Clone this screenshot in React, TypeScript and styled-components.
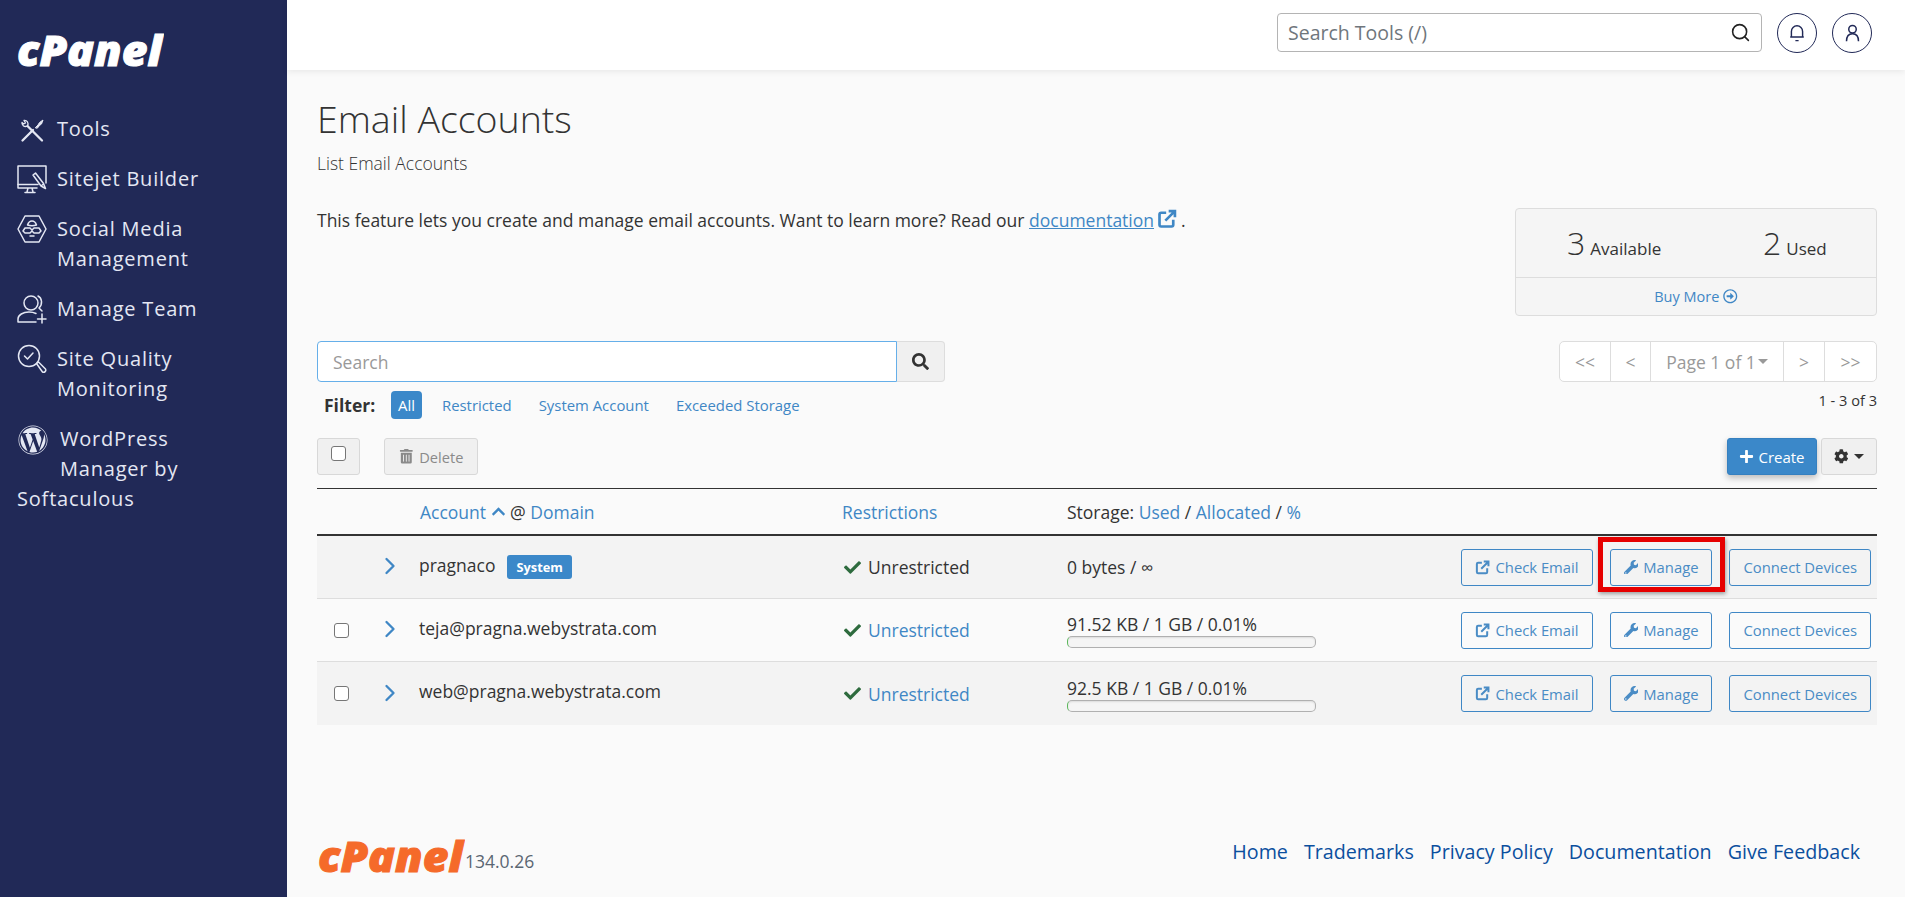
import React from 'react';
import styled, { createGlobalStyle } from 'styled-components';
import { ChevronRight, Search as SearchIcon } from 'lucide-react';
import {
  FaCheck,
  FaChevronUp,
  FaCog,
  FaPlus,
  FaRegArrowAltCircleRight,
  FaSearch,
  FaTrashAlt,
  FaWordpress,
  FaWrench,
} from 'react-icons/fa';

const GlobalStyle = createGlobalStyle`
  html, body {
    margin: 0;
    padding: 0;
    background: #fafafa;
    font-family: 'Open Sans', 'Liberation Sans', sans-serif;
    font-size: 17.5px;
    color: #333;
  }
  a {
    color: #3f87c5;
    text-decoration: none;
  }
  * {
    box-sizing: border-box;
  }
`;

const Page = styled.div`
  display: flex;
  min-height: 897px;
`;

/* sidebar */
const Sidebar = styled.aside`
  width: 287px;
  flex: none;
  background: #212957;
  color: #e4e7f3;
`;

const BrandBox = styled.div`
  height: 114px;
  padding: 21px 0 0 16px;
`;

const LogoMark = styled.svg`
  display: block;
  flex: none;
`;

const LogoWord = styled.text`
  font-family: 'Open Sans', sans-serif;
  font-style: italic;
  font-weight: 800;
  font-size: 42px;
`;

const Nav = styled.nav`
  display: flex;
  flex-direction: column;
  gap: 20px;
  padding-left: 17px;
  padding-right: 30px;
  font-size: 20px;
  line-height: 30px;
  letter-spacing: 0.8px;
`;

const NavItem = styled.a`
  display: flex;
  gap: 10px;
  color: inherit;
`;

const NavIcon = styled.span`
  width: 30px;
  height: 30px;
  flex: none;
  display: flex;
  align-items: center;
  justify-content: center;
`;

const FloatItem = styled.a`
  display: block;
  color: inherit;
`;

const FloatIcon = styled.span`
  float: left;
  width: 43px;
  height: 46px;
  padding: 1px 0 0 1px;
  font-size: 30px;
  line-height: 30px;
`;

/* top bar */
const Main = styled.div`
  flex: 1;
  min-width: 0;
  display: flex;
  flex-direction: column;
`;

const TopBar = styled.header`
  height: 70px;
  flex: none;
  display: flex;
  align-items: center;
  justify-content: flex-end;
  gap: 15px;
  padding: 0 33px 5px 0;
  background: #fff;
  box-shadow: 0 2px 6px rgba(0, 0, 0, 0.07);
`;

const ToolSearch = styled.div`
  width: 485px;
  height: 39px;
  display: flex;
  align-items: center;
  padding: 0 10px 0 8px;
  background: #fff;
  border: 1px solid #b4b4b4;
  border-radius: 4px;
  color: #222;
`;

const ToolInput = styled.input`
  flex: 1;
  min-width: 0;
  border: 0;
  outline: 0;
  padding: 0 2px;
  background: transparent;
  font-family: inherit;
  font-size: 19.5px;
  &::placeholder {
    color: #6f767c;
    opacity: 1;
  }
`;

const RoundButton = styled.span`
  width: 40px;
  height: 40px;
  display: flex;
  align-items: center;
  justify-content: center;
  border: 1px solid #212957;
  border-radius: 50%;
  color: #212957;
`;

/* content */
const Content = styled.main`
  padding: 0 28px 0 30px;
`;

const Title = styled.h1`
  margin: 24px 0 0;
  font-size: 37.5px;
  font-weight: 300;
  line-height: 50px;
  color: #333;
`;

const Subtitle = styled.p`
  margin: 7px 0 0;
  font-size: 17.5px;
  font-weight: 300;
  line-height: 24px;
`;

const IntroRow = styled.div`
  display: flex;
  justify-content: space-between;
  align-items: flex-start;
  margin-top: 33px;
`;

const Intro = styled.p`
  margin: 0;
  line-height: 24px;
`;

const DocLink = styled.a`
  text-decoration: underline;
`;

const IntroIcon = styled.a`
  margin-left: -2px;
  vertical-align: -2px;
`;

const StatsCard = styled.div`
  width: 362px;
  height: 108px;
  background: #f5f5f5;
  border: 1px solid #ddd;
  border-radius: 4px;
  display: flex;
  flex-direction: column;
`;

const StatsRow = styled.div`
  height: 69px;
  display: grid;
  grid-template-columns: 196px 1fr;
  align-items: center;
  padding-left: 51px;
  border-bottom: 1px solid #ddd;
`;

const Stat = styled.span`
  font-size: 17px;
  line-height: 1;
`;

const StatValue = styled.span`
  font-size: 32px;
  font-weight: 300;
  margin-right: 5px;
`;

const BuyMore = styled.a`
  flex: 1;
  display: flex;
  align-items: center;
  justify-content: center;
  gap: 4px;
  font-size: 14.5px;
`;

const ControlsRow = styled.div`
  display: flex;
  justify-content: space-between;
  align-items: flex-start;
  margin-top: 25px;
`;

const SearchGroup = styled.div`
  width: 628px;
  height: 41px;
  display: flex;
`;

const SearchField = styled.input`
  width: 580px;
  height: 41px;
  padding: 0 15px;
  background: #fff;
  border: 1px solid #66afe9;
  border-radius: 4px 0 0 4px;
  outline: 0;
  font-family: inherit;
  font-size: 17.5px;
  &::placeholder {
    color: #999;
    opacity: 1;
  }
`;

const SearchButton = styled.button`
  flex: 1;
  display: flex;
  align-items: center;
  justify-content: center;
  background: #f0f0f0;
  border: 1px solid #ddd;
  border-left: 0;
  border-radius: 0 4px 4px 0;
  color: #333;
  font-size: 17px;
`;

const FilterRow = styled.div`
  display: flex;
  align-items: center;
  height: 28px;
  margin-top: 9px;
  padding-left: 7px;
  font-size: 14.9px;
`;

const FilterLabel = styled.strong`
  width: 67px;
  font-size: 17.5px;
  font-weight: 700;
`;

const FilterLink = styled.a<{ $active?: boolean }>`
  display: flex;
  align-items: center;
  height: 28px;
  margin-right: ${(p) => (p.$active ? '20px' : '27px')};
  padding: ${(p) => (p.$active ? '0 7px' : '0')};
  border-radius: 4px;
  background: ${(p) => (p.$active ? '#3b88c9' : 'transparent')};
  color: ${(p) => (p.$active ? '#fff' : '#3f87c5')};
`;

const PagerColumn = styled.div`
  display: flex;
  flex-direction: column;
  align-items: flex-end;
`;

const Pager = styled.div`
  display: flex;
  height: 41px;
  background: #fff;
  border: 1px solid #ddd;
  border-radius: 5px;
`;

const PagerCell = styled.span<{ $width: number }>`
  width: ${(p) => p.$width}px;
  display: flex;
  align-items: center;
  justify-content: center;
  gap: 2px;
  color: #999;
  & + & {
    border-left: 1px solid #ddd;
  }
`;

const Caret = styled.span`
  display: inline-block;
  width: 0;
  height: 0;
  border-left: 5px solid transparent;
  border-right: 5px solid transparent;
  border-top: 5px solid currentColor;
`;

const PagerCount = styled.span`
  margin-top: 8px;
  font-size: 14.6px;
  line-height: 20px;
`;

const ActionBar = styled.div`
  display: flex;
  justify-content: space-between;
  height: 37px;
  margin-top: 19px;
`;

const ActionGroup = styled.div<{ $gap: number }>`
  display: flex;
  gap: ${(p) => p.$gap}px;
`;

const GreyButton = styled.button<{ $width: number; $muted?: boolean }>`
  width: ${(p) => p.$width}px;
  height: 37px;
  display: flex;
  align-items: center;
  justify-content: center;
  gap: 6px;
  background: #f0f0f0;
  border: 1px solid #d8d8d8;
  border-radius: 3px;
  font-family: inherit;
  font-size: 14.6px;
  color: ${(p) => (p.$muted ? '#8a8a8a' : '#333')};
`;

const CreateButton = styled.button`
  width: 90px;
  height: 37px;
  display: flex;
  align-items: center;
  justify-content: center;
  gap: 4px;
  background: #3b88c9;
  border: 1px solid #3580c0;
  border-radius: 3px;
  box-shadow: 0 3px 6px rgba(0, 0, 0, 0.25);
  font-family: inherit;
  font-size: 15px;
  color: #fff;
`;

const Checkbox = styled.input.attrs({ type: 'checkbox' })`
  appearance: none;
  width: 15px;
  height: 15px;
  margin: 0;
  background: #fff;
  border: 1px solid #767676;
  border-radius: 3px;
`;

const RaisedCheck = styled(Checkbox)`
  margin-bottom: 6px;
`;

/* table */
const columns = '48px 54px 423px 225px 1fr auto';

const HeadRow = styled.div`
  display: grid;
  grid-template-columns: ${columns};
  align-items: center;
  height: 48px;
  margin-top: 13px;
  border-top: 1px solid #333;
  border-bottom: 2px solid #333;
`;

const HeadCell = styled.div<{ $start: number; $inset?: number }>`
  grid-column: ${(p) => p.$start};
  display: flex;
  align-items: center;
  gap: 4.5px;
  padding-left: ${(p) => p.$inset || 0}px;
`;

const Row = styled.div<{ $shaded?: boolean }>`
  display: grid;
  grid-template-columns: ${columns};
  align-items: center;
  height: 63px;
  padding-right: 6px;
  background: ${(p) => (p.$shaded ? '#f3f3f3' : '#fafafa')};
  border-bottom: 1px solid #ddd;
  &:last-child {
    border-bottom: 0;
  }
`;

const CheckCell = styled.div`
  display: flex;
  justify-content: center;
`;

const ChevronCell = styled.div`
  display: flex;
  color: #3f87c5;
  margin-left: 11px;
  padding-bottom: 2px;
`;

const AccountCell = styled.div`
  display: flex;
  align-items: center;
  gap: 12px;
  padding-bottom: 5px;
`;

const Badge = styled.span`
  display: inline-flex;
  align-items: center;
  height: 24px;
  padding: 0 9px;
  margin-top: 5px;
  background: #3b88c9;
  border-radius: 3px;
  font-size: 12.8px;
  font-weight: 700;
  color: #fff;
`;

const RestrictionCell = styled.div`
  display: flex;
  align-items: center;
  gap: 7px;
`;

const CheckMark = styled(FaCheck)`
  color: #2e6b3e;
  font-size: 17px;
  margin-left: 2px;
`;

const StorageCell = styled.div``;

const StorageText = styled.div`
  line-height: 24px;
`;

const StorageBar = styled.div`
  width: 249px;
  height: 12px;
  background: #f5f5f5;
  border: 1px solid #b0b0b0;
  border-left-color: #5cb85c;
  border-radius: 5px;
  box-shadow: inset 0 1px 2px rgba(0, 0, 0, 0.1);
`;

const RowActions = styled.div`
  display: flex;
  gap: 17px;
`;

const OutlineButton = styled.a`
  height: 37px;
  display: flex;
  align-items: center;
  gap: 5px;
  padding: 0 13px;
  border: 1px solid #3f87c5;
  border-radius: 3px;
  font-size: 14.8px;
  color: #4a8cc5;
`;

const Highlight = styled.span`
  position: relative;
  &::after {
    content: '';
    position: absolute;
    top: -12px;
    left: -12px;
    right: -13px;
    bottom: -6px;
    border: 5px solid #e60000;
    box-shadow: 1px 2px 4px rgba(0, 0, 0, 0.35);
    pointer-events: none;
  }
`;

/* footer */
const Footer = styled.footer`
  margin-top: auto;
  display: flex;
  justify-content: space-between;
  align-items: center;
  padding: 0 45px 12px 30px;
`;

const FooterBrand = styled.div`
  display: flex;
  align-items: flex-end;
`;

const Version = styled.span`
  color: #5a6672;
  line-height: 36px;
  margin-bottom: 6px;
`;

const FooterLinks = styled.div`
  display: flex;
  gap: 16px;
  margin-bottom: 10px;
  font-size: 19.7px;
  a {
    color: #0b4f9e;
  }
`;

const ExternalIcon: React.FC<{ size: number }> = ({ size }) => (
  <svg width={size} height={size} viewBox="0 0 24 24" fill="none" stroke="currentColor" strokeWidth="3.2">
    <path d="M11 4.500H5a2 2 0 0 0-2 2V19a2 2 0 0 0 2 2h12.500a2 2 0 0 0 2-2v-6" />
    <path d="M10 14 20.500 3.500M14 2.500h7.500V10" />
  </svg>
);

const lineIcon = {
  width: 30,
  height: 30,
  viewBox: '0 0 30 30',
  fill: 'none',
  stroke: 'currentColor',
  strokeWidth: 1.5,
  strokeLinecap: 'round' as const,
  strokeLinejoin: 'round' as const,
};

const ToolsIcon = () => (
  <svg {...lineIcon}>
    <path d="M5.500 26.500 16 16" strokeWidth="2.300" />
    <path d="M18.500 13.500 21 11l1.500-2.500L26 6l-1.500 4-2 1.500-2 2.500z" fill="currentColor" strokeWidth="1" />
    <path d="M10.500 12 25 26.500" strokeWidth="2.300" />
    <path d="M5 8.500c-.5 2.500 2 5 5.500 3.500 1.500-3-.5-6-3.500-5.500l1.500 2.500-2 1z" strokeWidth="1.300" />
  </svg>
);

const BuilderIcon = () => (
  <svg {...lineIcon}>
    <path d="M21 20.500H1V2h28v17" />
    <path d="M1 20.500V24h19M11 24l-1 4M8 28.500h10M15 24l1 4" />
    <path d="M16 11l2.500-2 8 10.500 2 5-4.500-2.500zM24 22l2.500-2" />
  </svg>
);

const SocialIcon = () => (
  <svg {...lineIcon}>
    <path d="M8 2h14l7 13-7 13H8L1 15z" />
    <path d="M10.500 11c1-3 3-4 4.500-4s3.500 1 4.500 4c-3 1-6 1-9 0z" />
    <path d="M8 14h5l2 2 2-2h5l2 3-2 2h-5l-2-2-2 2H8l-2-2zM13 22h4" />
  </svg>
);

const TeamIcon = () => (
  <svg {...lineIcon}>
    <circle cx="14" cy="9" r="7" />
    <path d="M21 2c4 2 5 8 1 12l3 3" />
    <path d="M1 28v-3c0-4 5-7 11-7 3 0 5 .5 7 1.500M1 28h18M25 20v9M20.500 25H29" />
  </svg>
);

const QualityIcon = () => (
  <svg {...lineIcon}>
    <circle cx="12" cy="12" r="10.500" />
    <path d="m7.500 12 3 3 5.500-6" />
    <path d="m19.500 19.500 2-1.500 7 7c1 2-1 4-3 3z" />
  </svg>
);

const BrandLogo: React.FC<{ color: string }> = ({ color }) => (
  <LogoMark width="148" height="58" viewBox="0 0 148 58">
    <LogoWord x="1" y="45" fill={color} stroke={color} strokeWidth="1" textLength="145" lengthAdjust="spacingAndGlyphs">
      cPanel
    </LogoWord>
  </LogoMark>
);

type Account = {
  name: string;
  system?: boolean;
  storage: string;
  shaded?: boolean;
  highlight?: boolean;
};

const accounts: Account[] = [
  { name: 'pragnaco', system: true, storage: '0 bytes / ∞', shaded: true, highlight: true },
  { name: 'teja@pragna.webystrata.com', storage: '91.52 KB / 1 GB / 0.01%' },
  { name: 'web@pragna.webystrata.com', storage: '92.5 KB / 1 GB / 0.01%', shaded: true },
];

const App: React.FC = () => {
  return (
    <>
      <GlobalStyle />
      <Page>
        <Sidebar>
          <BrandBox>
            <BrandLogo color="#ffffff" />
          </BrandBox>
          <Nav>
            <NavItem><NavIcon><ToolsIcon /></NavIcon>Tools</NavItem>
            <NavItem><NavIcon><BuilderIcon /></NavIcon>Sitejet Builder</NavItem>
            <NavItem><NavIcon><SocialIcon /></NavIcon><span>Social Media Management</span></NavItem>
            <NavItem><NavIcon><TeamIcon /></NavIcon>Manage Team</NavItem>
            <NavItem><NavIcon><QualityIcon /></NavIcon><span>Site Quality<br />Monitoring</span></NavItem>
            <FloatItem>
              <FloatIcon><FaWordpress /></FloatIcon>
              WordPress Manager by Softaculous
            </FloatItem>
          </Nav>
        </Sidebar>
        <Main>
          <TopBar>
            <ToolSearch>
              <ToolInput placeholder="Search Tools (/)" />
              <SearchIcon size={21} strokeWidth={1.8} />
            </ToolSearch>
            <RoundButton>
              <svg width="16" height="18" viewBox="0 0 20 22" fill="none" stroke="currentColor" strokeWidth="1.8">
                <path d="M3 16V9a7 7 0 0 1 14 0v7zM1.500 16h17M8 20.500h4" />
              </svg>
            </RoundButton>
            <RoundButton>
              <svg width="15" height="18" viewBox="0 0 20 24" fill="none" stroke="currentColor" strokeWidth="2">
                <circle cx="10" cy="7" r="5" />
                <path d="M2 23c0-6 3-10 8-10s8 4 8 10" />
              </svg>
            </RoundButton>
          </TopBar>
          <Content>
            <Title>Email Accounts</Title>
            <Subtitle>List Email Accounts</Subtitle>
            <IntroRow>
              <Intro>
                This feature lets you create and manage email accounts. Want to learn more? Read our{' '}
                <DocLink>documentation</DocLink>{' '}
                <IntroIcon><ExternalIcon size={20} /></IntroIcon> .
              </Intro>
              <StatsCard>
                <StatsRow>
                  <Stat><StatValue>3</StatValue>Available</Stat>
                  <Stat><StatValue>2</StatValue>Used</Stat>
                </StatsRow>
                <BuyMore>Buy More <FaRegArrowAltCircleRight /></BuyMore>
              </StatsCard>
            </IntroRow>

            <ControlsRow>
              <div>
                <SearchGroup>
                  <SearchField placeholder="Search" />
                  <SearchButton><FaSearch /></SearchButton>
                </SearchGroup>
                <FilterRow>
                  <FilterLabel>Filter:</FilterLabel>
                  <FilterLink $active>All</FilterLink>
                  <FilterLink>Restricted</FilterLink>
                  <FilterLink>System Account</FilterLink>
                  <FilterLink>Exceeded Storage</FilterLink>
                </FilterRow>
              </div>
              <PagerColumn>
                <Pager>
                  <PagerCell $width={50}>&lt;&lt;</PagerCell>
                  <PagerCell $width={40}>&lt;</PagerCell>
                  <PagerCell $width={133}>Page 1 of 1<Caret /></PagerCell>
                  <PagerCell $width={41}>&gt;</PagerCell>
                  <PagerCell $width={52}>&gt;&gt;</PagerCell>
                </Pager>
                <PagerCount>1 - 3 of 3</PagerCount>
              </PagerColumn>
            </ControlsRow>

            <ActionBar>
              <ActionGroup $gap={24}>
                <GreyButton $width={43}><RaisedCheck /></GreyButton>
                <GreyButton $width={94} $muted><FaTrashAlt />Delete</GreyButton>
              </ActionGroup>
              <ActionGroup $gap={4}>
                <CreateButton><FaPlus />Create</CreateButton>
                <GreyButton $width={56}><FaCog /><Caret /></GreyButton>
              </ActionGroup>
            </ActionBar>

            <HeadRow>
              <HeadCell $start={3} $inset={1}>
                <a>Account</a>
                <a><FaChevronUp size={15} /></a>
                @ <a>Domain</a>
              </HeadCell>
              <HeadCell $start={4}><a>Restrictions</a></HeadCell>
              <HeadCell $start={5}>
                Storage: <a>Used</a> / <a>Allocated</a> / <a>%</a>
              </HeadCell>
            </HeadRow>

            <div>
              {accounts.map((acc) => (
                <Row key={acc.name} $shaded={acc.shaded}>
                  <CheckCell>{!acc.system && <Checkbox />}</CheckCell>
                  <ChevronCell><ChevronRight size={28} strokeWidth={2} /></ChevronCell>
                  <AccountCell>
                    {acc.name}
                    {acc.system && <Badge>System</Badge>}
                  </AccountCell>
                  <RestrictionCell>
                    <CheckMark />
                    {acc.system ? 'Unrestricted' : <a>Unrestricted</a>}
                  </RestrictionCell>
                  <StorageCell>
                    <StorageText>{acc.storage}</StorageText>
                    {!acc.system && <StorageBar />}
                  </StorageCell>
                  <RowActions>
                    <OutlineButton><ExternalIcon size={15} />Check Email</OutlineButton>
                    {acc.highlight ? (
                      <Highlight>
                        <OutlineButton><FaWrench />Manage</OutlineButton>
                      </Highlight>
                    ) : (
                      <OutlineButton><FaWrench />Manage</OutlineButton>
                    )}
                    <OutlineButton>Connect Devices</OutlineButton>
                  </RowActions>
                </Row>
              ))}
            </div>
          </Content>
          <Footer>
            <FooterBrand>
              <BrandLogo color="#f56a2a" />
              <Version>134.0.26</Version>
            </FooterBrand>
            <FooterLinks>
              <a>Home</a>
              <a>Trademarks</a>
              <a>Privacy Policy</a>
              <a>Documentation</a>
              <a>Give Feedback</a>
            </FooterLinks>
          </Footer>
        </Main>
      </Page>
    </>
  );
};

export default App;
